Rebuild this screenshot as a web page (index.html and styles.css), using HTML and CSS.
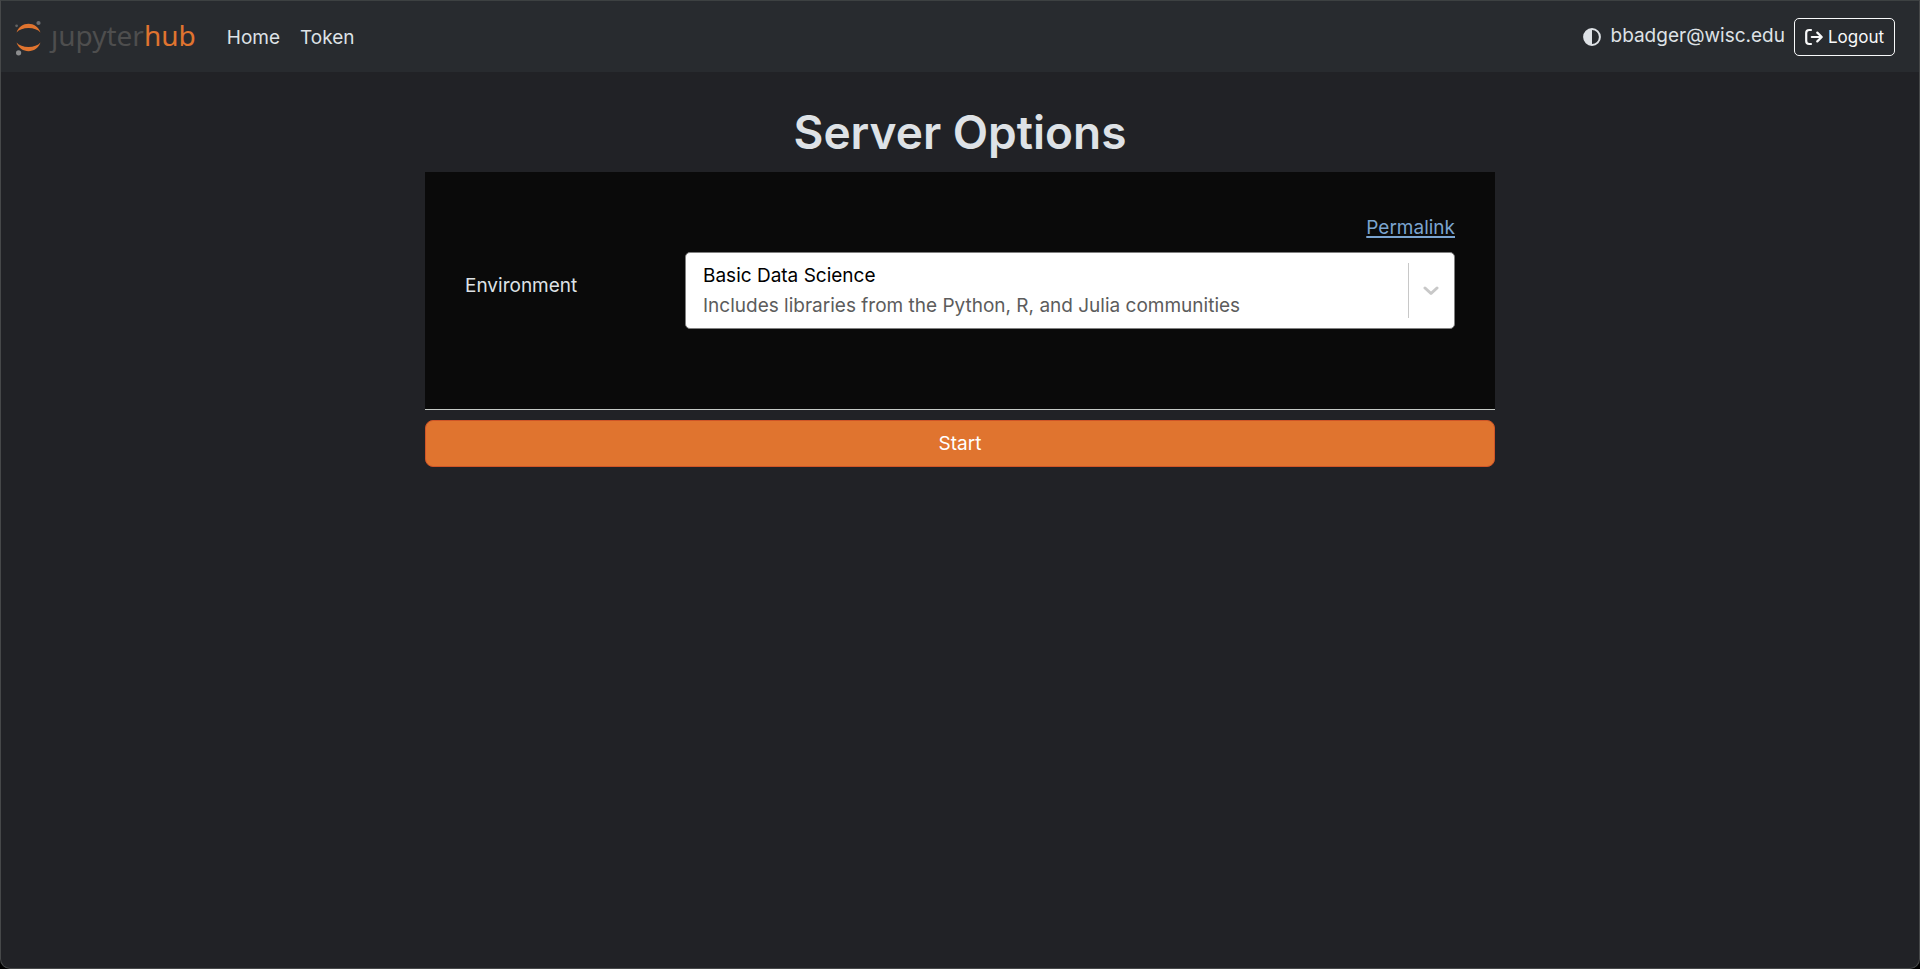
FILE: index.html
```html
<!DOCTYPE html>
<html lang="en">
<head>
<meta charset="utf-8">
<meta name="viewport" content="width=device-width, initial-scale=1">
<title>JupyterHub</title>
<link rel="stylesheet" href="styles.css">
</head>
<body>
<div class="window">
  <header class="navbar">
    <a class="brand" href="#" aria-label="jupyterhub">
      <svg class="brand-mark" viewBox="0 0 28 38" width="28" height="38" aria-hidden="true">
        <path d="M1.500 14.500C3.500 9 8.300 5.800 13.500 5.800S23.500 9 25.500 14.500C23 11.600 18.500 10 13.500 10S4 11.600 1.500 14.500Z" fill="#e0742f"/>
        <path d="M1.500 24.500C3.500 30 8.300 33.200 13.500 33.200S23.500 30 25.500 24.500C23 27.400 18.500 29 13.500 29S4 27.400 1.500 24.500Z" fill="#e0742f"/>
        <circle cx="23.500" cy="5" r="2.100" fill="#6b6d70"/>
        <circle cx="1.600" cy="7.800" r="1.400" fill="#616262"/>
        <circle cx="3.600" cy="34.800" r="2.600" fill="#8c8d8e"/>
      </svg>
      <span class="brand-text">ȷupyter<span class="brand-hub">hub</span></span>
    </a>
    <nav class="nav">
      <a class="nav-link" href="#">Home</a>
      <a class="nav-link" href="#">Token</a>
    </nav>
    <div class="account">
      <button class="theme-toggle" type="button" aria-label="Toggle dark mode">
        <svg viewBox="0 0 18 18" width="18" height="18" aria-hidden="true">
          <circle cx="9" cy="9" r="7.900" fill="none" stroke="#dee2e6" stroke-width="2"/>
          <path d="M9 1A8 8 0 0 0 9 17Z" fill="#dee2e6"/>
        </svg>
      </button>
      <span class="user">bbadger@wisc.edu</span>
      <a class="logout" href="#">
        <svg viewBox="0 0 18 18" width="18" height="18" fill="none" stroke="#f8f9fa" stroke-width="2.200" stroke-linecap="round" stroke-linejoin="round" aria-hidden="true">
          <path d="M6 2H4.200A3 3 0 0 0 1.200 5V13A3 3 0 0 0 4.200 16H6"/>
          <path d="M6.800 9H16.500M12.300 4.600 16.700 9 12.300 13.400"/>
        </svg>
        Logout
      </a>
    </div>
  </header>
  <main class="content">
    <h1 class="title">Server Options</h1>
    <form class="options">
      <div class="panel">
        <div class="permalink-row"><a class="permalink" href="#">Permalink</a></div>
        <div class="field">
          <label class="field-label" for="environment">Environment</label>
          <button class="picker" id="environment" type="button" aria-haspopup="listbox">
            <span class="picker-value">
              <span class="picker-name">Basic Data Science</span>
              <span class="picker-note">Includes libraries from the Python, R, and Julia communities</span>
            </span>
            <span class="picker-arrow">
              <svg viewBox="0 0 16 10" width="16" height="10" fill="none" stroke="#c8c8c8" stroke-width="3" stroke-linecap="round" stroke-linejoin="round" aria-hidden="true"><path d="M2 2 8 7.500 14 2"/></svg>
            </span>
          </button>
        </div>
      </div>
      <button class="start" type="submit">Start</button>
    </form>
  </main>
</div>
</body>
</html>
```
FILE: styles.css
```css
* {
  box-sizing: border-box;
}

body {
  margin: 0;
  background: #000;
  color: #dee2e6;
  font-family: Inter, "Liberation Sans", sans-serif;
  font-size: 19px;
  line-height: 30px;
}

button {
  font: inherit;
  cursor: pointer;
}

.window {
  min-height: 100vh;
  background: #212226;
  border: 1px solid #464849;
  border-top-color: #3d4142;
  border-radius: 0 0 10px 10px;
}

.navbar {
  display: flex;
  align-items: center;
  min-height: 71px;
  padding: 0 24px 0 14px;
  background: #282b2f;
}

.brand {
  display: flex;
  align-items: center;
  gap: 8px;
  text-decoration: none;
}

.brand-text {
  color: #4e4e4e;
  font-family: "Noto Sans", sans-serif;
  font-size: 28px;
  padding-bottom: 4px;
}

.brand-hub {
  color: #e0742f;
}

.nav {
  display: flex;
  gap: 20px;
  margin-left: 31px;
  padding-top: 2px;
}

.nav-link {
  color: #dee2e6;
  text-decoration: none;
}

.account {
  display: flex;
  align-items: center;
  margin-left: auto;
}

.theme-toggle {
  display: flex;
  padding: 0;
  border: 0;
  background: none;
}

.user {
  margin: 0 9px 2px 10px;
}

.logout {
  display: flex;
  align-items: center;
  gap: 5px;
  padding: 3px 10px;
  border: 1px solid #f8f9fa;
  border-radius: 5px;
  color: #f8f9fa;
  font-size: 17px;
  text-decoration: none;
}

.content {
  max-width: 1070px;
  margin: 0 auto;
  padding-top: 30px;
}

.title {
  margin: 0 0 10px;
  font-size: 46px;
  font-weight: 600;
  line-height: 60px;
  text-align: center;
}

.panel {
  padding: 41px 40px 80px;
  background: #0a0a0a;
  border-bottom: 1px solid #c5cac6;
}

.permalink-row {
  display: flex;
  justify-content: flex-end;
  margin-bottom: 9px;
}

.permalink {
  color: #7ba4d0;
  text-underline-offset: 2px;
  text-decoration-thickness: 2px;
}

.field {
  display: grid;
  grid-template-columns: 2fr 7fr;
}

.field-label {
  padding-top: 19px;
}

.picker {
  display: flex;
  padding: 0;
  border: 1px solid #808080;
  border-radius: 5px;
  background: #fff;
  text-align: left;
}

.picker-value {
  display: flex;
  flex: 1;
  flex-direction: column;
  padding: 8px 17px 7px;
}

.picker-name {
  color: #000;
}

.picker-note {
  color: #5c5c5c;
}

.picker-arrow {
  display: flex;
  align-items: center;
  align-self: stretch;
  margin: 10px 0;
  padding: 0 15px 0 14px;
  border-left: 1px solid #c8c8c8;
}

.start {
  display: block;
  width: 100%;
  margin-top: 10px;
  padding: 8px 8px 7px;
  border: 1px solid #cf5527;
  border-radius: 8px;
  background: #e0742f;
  color: #fff;
}
```
